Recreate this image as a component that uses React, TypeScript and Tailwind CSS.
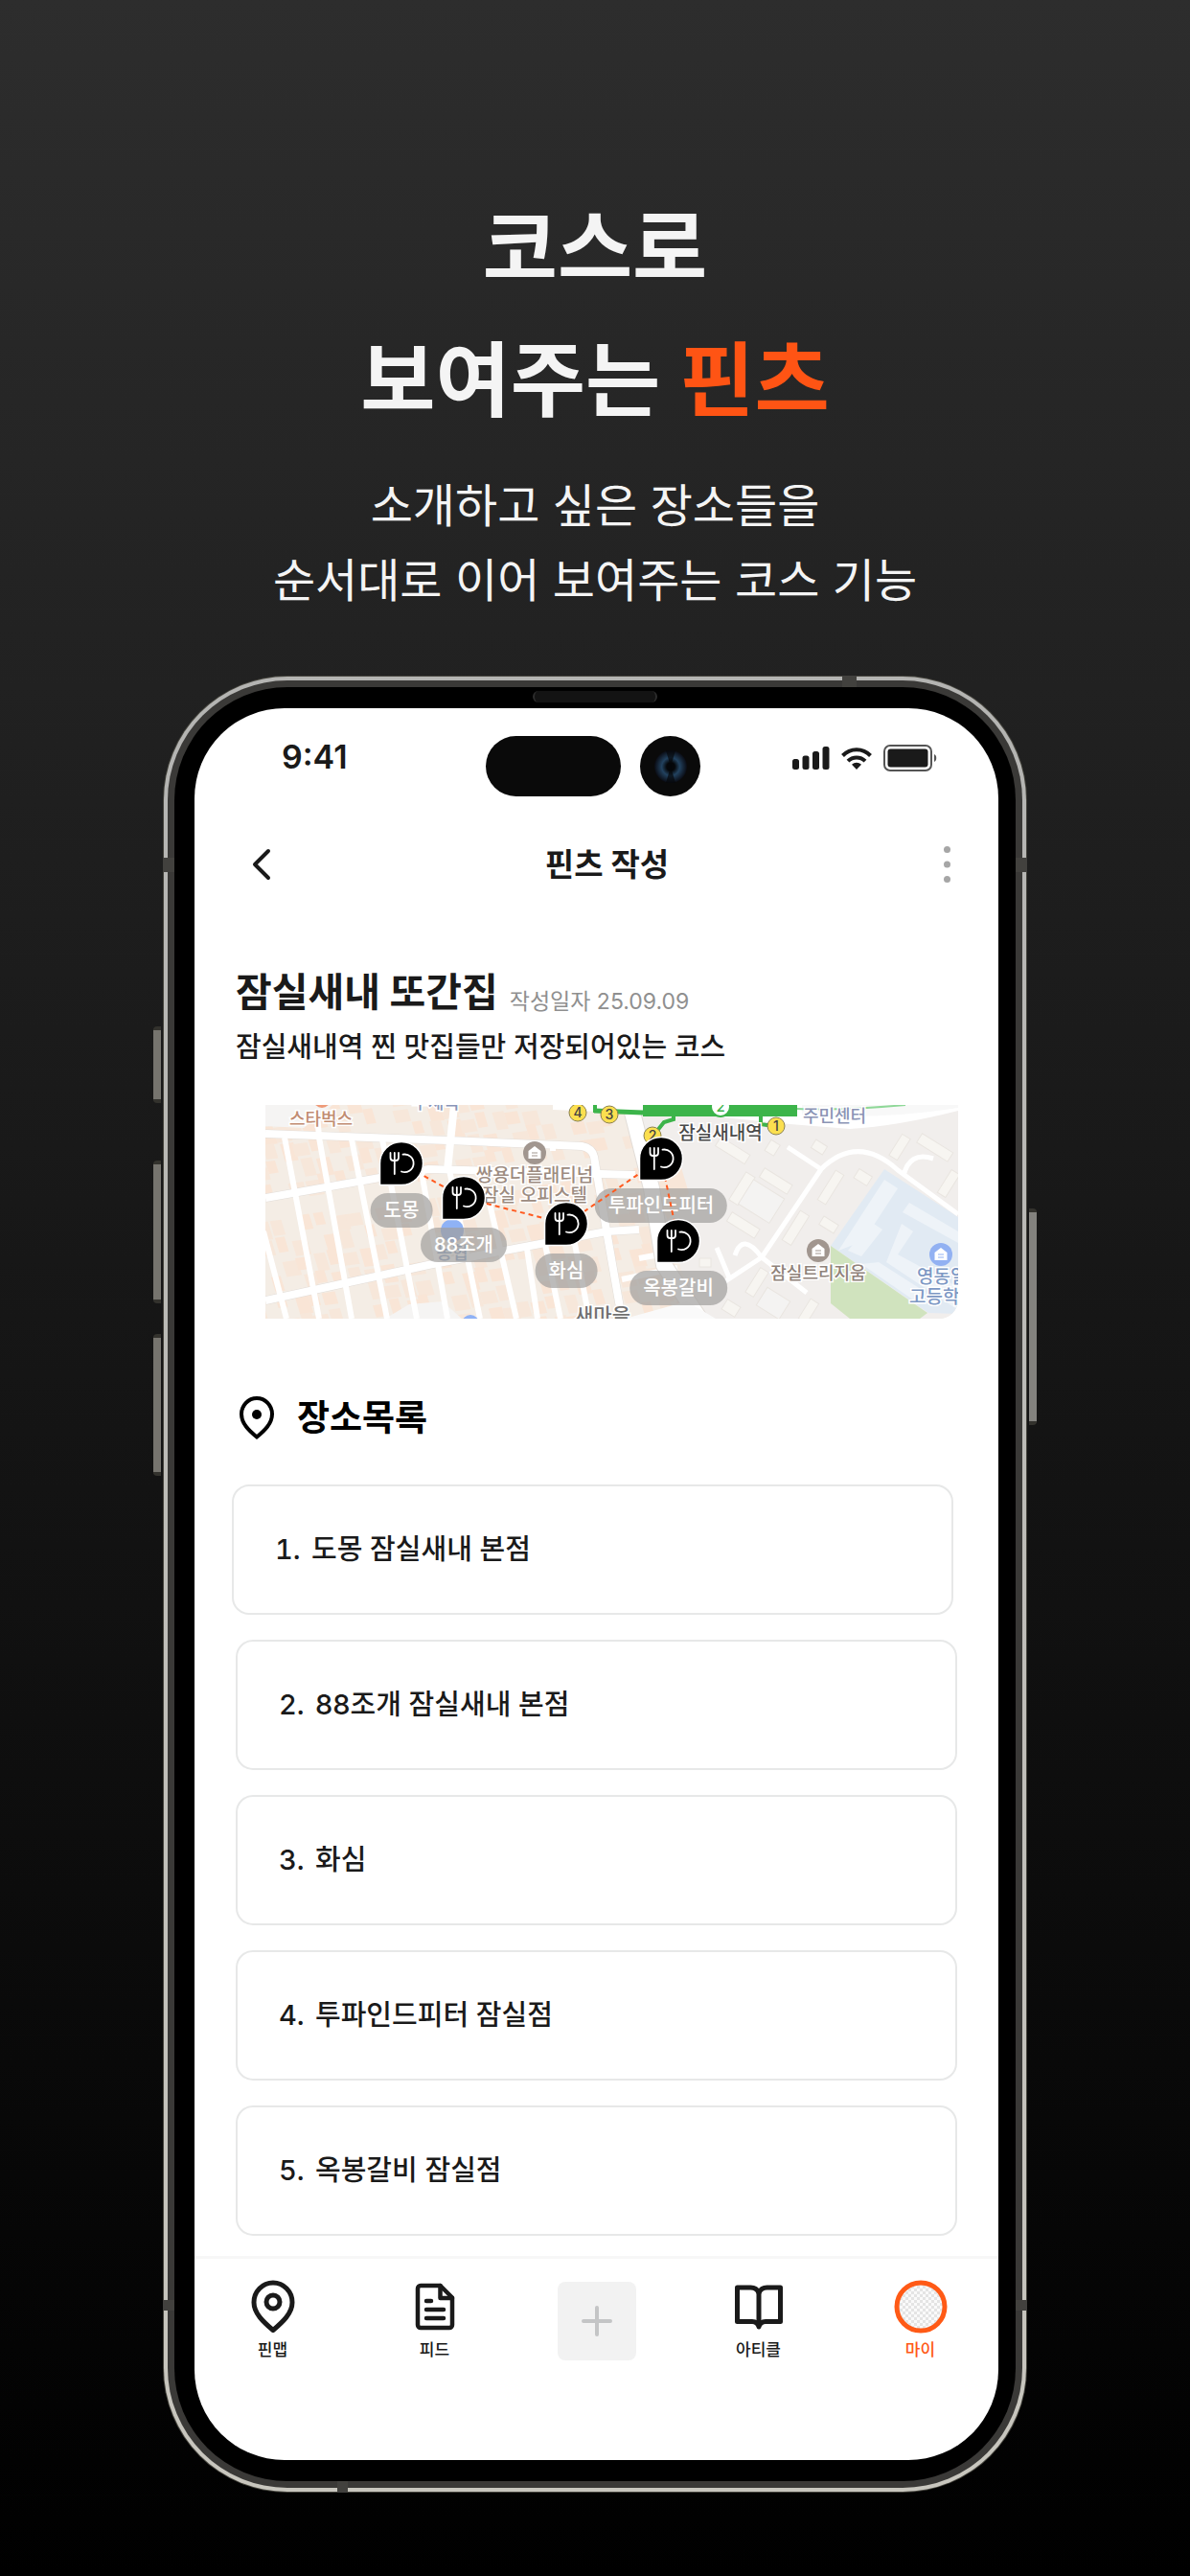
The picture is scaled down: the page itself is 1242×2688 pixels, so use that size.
import { ReactNode } from "react";

type Place = { id: number; name: string };

const places: Place[] = [
  { id: 1, name: "도몽 잠실새내 본점" },
  { id: 2, name: "88조개 잠실새내 본점" },
  { id: 3, name: "화심" },
  { id: 4, name: "투파인드피터 잠실점" },
  { id: 5, name: "옥봉갈비 잠실점" },
];

// Pin centers, in map pixels
const pins = [
  { label: "도몽", x: 142, y: 61 },
  { label: "88조개", x: 207, y: 97 },
  { label: "화심", x: 314, y: 124 },
  { label: "투파인드피터", x: 413, y: 56 },
  { label: "옥봉갈비", x: 431, y: 142 },
];

const route = pins.map((pin) => `${pin.x},${pin.y}`).join(" ");

// Small building footprints in the blocks on the left side of the map
const lots: { x: number; y: number; w: number; h: number; tone: number }[] = [];
for (let row = 0; row < 14; row++) {
  for (let col = 0; col < 32; col++) {
    const seed = (row * 37 + col * 53 + row * col * 7) % 11;
    if (seed < 8) {
      lots.push({
        x: -60 + col * 16 + (seed % 3) * 2,
        y: -28 + row * 20 + (seed % 4) * 2,
        w: 10 + (seed % 4) * 2,
        h: 13 + (seed % 3) * 3,
        tone: seed % 2,
      });
    }
  }
}

const SignalIcon = () => (
  <svg width="39" height="24" viewBox="0 0 39 24" fill="#1a1a1a">
    <rect x="0" y="13" width="7" height="11" rx="2.500" />
    <rect x="10.5" y="9.500" width="7" height="14.500" rx="2.500" />
    <rect x="21" y="5" width="7" height="19" rx="2.500" />
    <rect x="31.5" y="0" width="7" height="24" rx="2.500" />
  </svg>
);

const WifiIcon = () => (
  <svg width="32" height="23" viewBox="0 0 32 23" fill="none" stroke="#1a1a1a" strokeWidth="4">
    <path d="M1.5 8.5C9.5 .2 22.5 .2 30.500 8.500" />
    <path d="M7 14.200C12 9.200 20 9.200 25 14.200" />
    <path d="M16 23l-5-5.200c2.800-2.700 7.200-2.700 10 0z" fill="#1a1a1a" stroke="none" />
  </svg>
);

const BatteryIcon = () => (
  <svg width="56" height="28" viewBox="0 0 56 28" fill="none">
    <rect x="1" y="1" width="49" height="26" rx="6" stroke="#555" strokeWidth="2" />
    <rect x="4.500" y="4.500" width="42" height="19" rx="3" fill="#1a1a1a" />
    <path d="M53 10c3 1.300 3 6.700 0 8z" fill="#555" />
  </svg>
);

const PinIcon = () => (
  <svg width="46" height="56" viewBox="0 0 46 56" fill="none" stroke="#1a1a1a" strokeWidth="5">
    <path d="M23 52.500C13 44 3 35 3 23.500a20 20.500 0 0 1 40 0C43 35 33 44 23 52.500z" strokeLinejoin="round" />
    <circle cx="23" cy="23" r="7" />
  </svg>
);

const FeedIcon = () => (
  <svg width="42" height="50" viewBox="0 0 42 50" fill="none" stroke="#1a1a1a" strokeWidth="4.500" strokeLinecap="round" strokeLinejoin="round">
    <path d="M26.500 3H6a3 3 0 0 0-3 3v38a3 3 0 0 0 3 3h30a3 3 0 0 0 3-3V15.500z" />
    <path d="M26.500 3v13H39" />
    <path d="M12 19h5M12 28h18M12 37h18" />
  </svg>
);

const ArticleIcon = () => (
  <svg width="52" height="48" viewBox="0 0 52 48" fill="none" stroke="#1a1a1a" strokeWidth="5" strokeLinejoin="round">
    <path d="M26 9.500C24.500 6 21.500 4 17.500 4H3.500v35.500H19c4 0 6 1.500 7 5.500 1-4 3-5.500 7-5.500h15.500V4h-14c-4 0-7 2-8.500 5.500z" />
    <path d="M26 9v34" />
  </svg>
);

const MyIcon = () => (
  <svg width="56" height="56" viewBox="0 0 56 56">
    <defs>
      <pattern id="checker" width="6" height="6" patternUnits="userSpaceOnUse">
        <rect width="6" height="6" fill="#fafafa" />
        <rect width="3" height="3" fill="#e4e4e4" />
        <rect x="3" y="3" width="3" height="3" fill="#e4e4e4" />
      </pattern>
    </defs>
    <circle cx="28" cy="28" r="25" fill="url(#checker)" stroke="#ff5a16" strokeWidth="5" />
  </svg>
);

const HomeMark = ({ x, y, color }: { x: number; y: number; color: string }) => (
  <g>
    <circle cx={x} cy={y} r="12" fill={color} />
    <path d={`M${x} ${y - 7}l6.500 5v8h-13v-8z`} fill="#fff" />
    <path d={`M${x - 3} ${y}h6M${x - 3} ${y + 3}h6`} stroke={color} strokeWidth="1" />
  </g>
);

const Exit = ({ x, y, n }: { x: number; y: number; n: string }) => (
  <g>
    <circle cx={x} cy={y} r="9" fill="#fbdf4f" stroke="#8c8250" strokeWidth="1" />
    <text x={x} y={y + 5} fontSize="14" fontWeight="500" fill="#444" stroke="none" textAnchor="middle">
      {n}
    </text>
  </g>
);

const MapDrawing = () => (
  <svg
    className="absolute left-0 top-0 font-['Inter','Noto_Sans_CJK_KR',sans-serif]"
    width="723"
    height="223"
    viewBox="0 0 723 223"
  >
    <defs>
      <clipPath id="blocks">
        <path d="M0 0H383L403 87L453 223H0z" />
      </clipPath>
    </defs>
    <rect width="723" height="223" fill="#f1eeec" />

    {/* housing blocks */}
    <path d="M0 0H383L403 87L453 223H0z" fill="#f4ede5" />
    <g clipPath="url(#blocks)">
      <g transform="rotate(-8 200 110) skewX(9)">
        {lots.map((lot, i) => (
          <rect
            key={i}
            x={lot.x}
            y={lot.y}
            width={lot.w}
            height={lot.h}
            fill={lot.tone ? "#f7e7da" : "#f9e5d6"}
          />
        ))}
      </g>
    </g>
    <path d="M0 0H70L40 24L0 22z" fill="#f5f4f3" />
    <path d="M125 223L150 208L185 205L205 223z" fill="#f5f4f3" />
    <path d="M403 87L433 62L442 92L420 120z" fill="#f8e6d8" />

    {/* roads on the left */}
    <g fill="none" stroke="#e2ddd8" strokeWidth="9">
      <path d="M0 30L190 37L330 43Q341 45 343 54L357 137L372 223" />
      <path d="M0 97L170 67L386 73M0 204L170 167L260 150L356 132L390 130" />
    </g>
    <g fill="none" stroke="#fff" strokeWidth="8">
      <path d="M0 30L190 37L330 43Q341 45 343 54L357 137L372 223" />
      <path d="M0 97L170 67L386 73M0 204L170 167L260 150L356 132L390 130" />
      <path d="M197 0L190 68" />
    </g>
    <g fill="none" stroke="#fff" strokeWidth="6">
      <path d="M54 8L56 34L90 223M20 34L56 223M-2 132L22 223M90 36L127 223M122 36L158 223" />
      <path d="M163 70L190 223M192 68L224 223M231 90L262 223M273 150L284 223M292 146L308 223M322 140L338 223" />
      <path d="M300 40V48M372 182L430 170M390 160L412 156" />
    </g>
    <path d="M383 8L403 87L416 167L453 223" fill="none" stroke="#e2ddd8" strokeWidth="18" />
    <path d="M383 8L403 87L416 167L453 223" fill="none" stroke="#fff" strokeWidth="16" />
    <path d="M375 223L440 205L470 223z" fill="#fafafa" />

    {/* avenue under the station */}
    <path d="M300 0H723V6Q660 22 610 25Q540 20 470 12L300 5z" fill="#fff" />
    <path d="M560 0H723V3Q640 16 560 10z" fill="#f8f8f8" />

    {/* apartment complex */}
    <g fill="#f7f5f1" stroke="#e9e5e0" strokeWidth="1">
      <rect x="470" y="42" width="36" height="11" transform="rotate(32 488 47)" />
      <rect x="524" y="38" width="11" height="13" transform="rotate(32 529 44)" />
      <rect x="571" y="39" width="14" height="10" transform="rotate(32 578 44)" />
      <rect x="657" y="31" width="10" height="26" transform="rotate(32 662 44)" />
      <rect x="680" y="39" width="38" height="11" transform="rotate(32 699 44)" />
      <rect x="616" y="70" width="16" height="11" transform="rotate(32 624 75)" />
      <rect x="708" y="68" width="10" height="28" transform="rotate(32 713 82)" />
      <rect x="492" y="70" width="11" height="34" transform="rotate(32 497 87)" />
      <rect x="516" y="74" width="34" height="11" transform="rotate(32 533 79)" />
      <rect x="585" y="68" width="10" height="36" transform="rotate(32 590 86)" />
      <rect x="498" y="86" width="38" height="30" transform="rotate(32 518 102)" fill="#f4f3f2" />
      <rect x="548" y="110" width="11" height="36" transform="rotate(32 553 128)" />
      <rect x="482" y="120" width="34" height="11" transform="rotate(32 499 125)" />
      <rect x="579" y="120" width="18" height="10" transform="rotate(32 588 125)" />
      <rect x="453" y="160" width="12" height="9" />
      <rect x="508" y="170" width="10" height="30" transform="rotate(32 513 185)" />
      <rect x="516" y="196" width="28" height="22" transform="rotate(32 530 207)" fill="#f4f3f2" />
      <rect x="562" y="203" width="10" height="24" transform="rotate(32 567 215)" />
      <rect x="478" y="206" width="16" height="12" transform="rotate(32 486 212)" />
    </g>

    <path d="M646 67L723 117V218L692 217L590 147z" fill="#e1eaf3" />
    <g fill="#eef3f8">
      <path d="M646 78L660 87L624 142L598 152z" />
      <path d="M632 122L644 130L622 158L608 152z" />
      <path d="M672 102L723 132V144L665 112z" />
      <path d="M664 124L676 132L660 156L723 190V214L648 164z" />
      <path d="M640 164L690 196L680 206L622 166z" />
    </g>
    <path d="M590 147L691 217L683 223H610L590 207z" fill="#d0e3be" />

    <g fill="none" stroke="#fff" strokeWidth="5" strokeLinejoin="round">
      <path d="M545 44L580 67M480 184L518 159L580 67Q618 30 660 68L723 114M666 74Q672 48 697 56" />
      <path d="M471 149L484 180M490 157Q498 132 518 159L565 196" />
    </g>

    {/* subway line and exits */}
    <path d="M343 6L394 8" stroke="#3cb44a" strokeWidth="5" fill="none" />
    <path d="M344 0V8" stroke="#3cb44a" strokeWidth="4" fill="none" />
    <path d="M555 4Q600 6 668 0" stroke="#8fd898" strokeWidth="2" fill="none" />
    <path d="M394 0H555V12H394z" fill="#3cb44a" />
    <path d="M426 8V15L416 18L408 28M517 10V20L530 22" stroke="#3cb44a" strokeWidth="4" fill="none" />
    <circle cx="475" cy="2" r="10" fill="#fff" stroke="#3cb44a" strokeWidth="2" />
    <text x="475" y="7" fontSize="15" fontWeight="500" fill="#3cb44a" textAnchor="middle">2</text>
    <Exit x={326} y={8} n="4" />
    <Exit x={359} y={10} n="3" />
    <Exit x={404} y={32} n="2" />
    <Exit x={533} y={22} n="1" />

    {/* place marks */}
    <circle cx="59" cy="-6" r="9" fill="#ee9a78" />
    <circle cx="195" cy="131" r="12" fill="#8fb2f5" />
    <circle cx="214" cy="228" r="9" fill="#8fb2f5" />
    <HomeMark x={281} y={50} color="#a1968f" />
    <HomeMark x={577} y={152} color="#a1968f" />
    <HomeMark x={705} y={156} color="#92b1f2" />

    <g fontSize="18" fontWeight="500" textAnchor="middle" stroke="#fff" strokeWidth="3" paintOrder="stroke">
      <text x="58" y="21" fill="#c18c72">스타벅스</text>
      <text x="178" y="4" fill="#8a95b8">우체국</text>
      <text x="281" y="80" fontSize="19" fill="#9d8c81">쌍용더플래티넘</text>
      <text x="281" y="101" fontSize="19" fill="#9d8c81">잠실 오피스텔</text>
      <text x="475" y="36" fontSize="19" fill="#4a4a4a">잠실새내역</text>
      <text x="594" y="18" fill="#8b94b5">주민센터</text>
      <text x="352" y="227" fontSize="21" fill="#707070">새마을</text>
      <text x="577" y="182" fill="#8f827a">잠실트리지움</text>
      <text x="195" y="161" fill="#7d98c4">농협</text>
      <text x="680" y="186" fontSize="19" fill="#7d98c4" textAnchor="start">영동일</text>
      <text x="672" y="207" fontSize="19" fill="#7d98c4" textAnchor="start">고등학교</text>
    </g>
  </svg>
);

const CourseMap = () => (
  <div className="relative ml-[74px] mr-[42px] mt-10 h-[223px] overflow-hidden rounded-br-[20px] bg-[#f1eeec]">
    <MapDrawing />
    {pins.map((pin) => (
      <span
        key={pin.label}
        className="absolute flex h-[36px] -translate-x-1/2 items-center whitespace-nowrap rounded-full bg-[#a09e9c]/70 px-[14px] text-[20px] leading-[36px] font-medium text-white"
        style={{ left: pin.x, top: pin.y + 31 }}
      >
        {pin.label}
      </span>
    ))}
    <svg className="absolute left-0 top-0" width="723" height="223" viewBox="0 0 723 223">
      <polyline points={route} fill="none" stroke="#ff5a1f" strokeWidth="2" strokeDasharray="5 4" />
      {pins.map((pin) => (
        <g key={pin.label} transform={`translate(${pin.x} ${pin.y})`}>
          <path d="M-22.500 22.500V0A22.500 22.500 0 1 1 0 22.500z" fill="#000" stroke="#fff" strokeWidth="1.500" />
          <g fill="none" stroke="#fff" strokeWidth="1.800" strokeLinecap="round">
            <path d="M-11.500-11v5q0 3 3 3h2.500q3 0 3-3V-11M-7.200-11V11" />
            <path d="M1.500-9.300A9.300 9.300 0 1 1 0 8.500" />
          </g>
        </g>
      ))}
    </svg>
  </div>
);

const StatusBar = () => (
  <div className="grid grid-cols-[1fr_auto_1fr] items-start pr-[7px] pt-[29px]">
    <div className="pl-[91px] text-[34px] leading-[44px] font-semibold">9:41</div>
    <div className="flex gap-5">
      <div className="h-[63px] w-[141px] rounded-full bg-[#0a0a0a]" />
      <div className="flex h-[63px] w-[63px] items-center justify-center rounded-full bg-[#0a0a0a]">
        <svg width="36" height="36" viewBox="0 0 36 36">
          <defs>
            <radialGradient id="lens">
              <stop offset="0.250" stopColor="#05070a" />
              <stop offset="0.550" stopColor="#22425f" />
              <stop offset="1" stopColor="#0a0c14" />
            </radialGradient>
          </defs>
          <circle cx="18" cy="18" r="17" fill="url(#lens)" />
          <path d="M18 18L13 1H23zM18 18L13 35H23z" fill="#05070a" opacity="0.700" />
        </svg>
      </div>
    </div>
    <div className="flex h-[46px] items-center justify-end gap-3 pr-[57px]">
      <SignalIcon />
      <WifiIcon />
      <BatteryIcon />
    </div>
  </div>
);

const NavItem = ({
  label,
  active,
  children,
}: {
  label: string;
  active?: boolean;
  children: ReactNode;
}) => (
  <button type="button" className="flex flex-col items-center gap-[5px]">
    <span className="flex h-[56px] items-center">{children}</span>
    <span
      className={
        active
          ? "text-[17px] leading-6 font-medium text-[#ff5a16]"
          : "text-[17px] leading-6 font-medium text-[#1a1a1a]"
      }
    >
      {label}
    </span>
  </button>
);

const Screen = () => (
  <div className="overflow-hidden rounded-[94px] bg-white text-[#1a1a1a]">
    <StatusBar />

    <header className="mt-10 flex h-[62px] items-center justify-between pl-[60px] pr-[49px]">
      <button type="button" aria-label="뒤로">
        <svg width="20" height="34" viewBox="0 0 20 34" fill="none" stroke="#1a1a1a" strokeWidth="4" strokeLinecap="round" strokeLinejoin="round">
          <path d="M17 3L3 17L17 31" />
        </svg>
      </button>
      <h2 className="text-[33px] leading-[62px] font-bold">핀츠 작성</h2>
      <button type="button" aria-label="더보기">
        <svg width="9" height="40" viewBox="0 0 9 40" fill="#a6a6a6">
          <circle cx="4.500" cy="4.500" r="3.500" />
          <circle cx="4.500" cy="20" r="3.500" />
          <circle cx="4.500" cy="35.500" r="3.500" />
        </svg>
      </button>
    </header>

    <section className="mt-[78px] px-[43px]">
      <div className="flex items-end gap-3">
        <h3 className="text-[41px] leading-[48px] font-bold">잠실새내 또간집</h3>
        <span className="text-[23px] leading-7 font-normal text-[#8f8f8f]">작성일자 25.09.09</span>
      </div>
      <p className="mt-[14px] text-[29px] leading-10 font-medium">
        잠실새내역 찐 맛집들만 저장되어있는 코스
      </p>
    </section>

    <CourseMap />

    <section className="mt-20 px-[43px]">
      <div className="flex h-12 items-center gap-6 pl-1 text-black">
        <svg width="36" height="46" viewBox="0 0 36 46" fill="none" stroke="currentColor" strokeWidth="4">
          <path d="M18 42.500C10 36 2 28.500 2 18.500a16 16.500 0 0 1 32 0C34 28.500 26 36 18 42.500z" />
          <circle cx="18" cy="19" r="5" fill="currentColor" stroke="none" />
        </svg>
        <h3 className="text-[37px] leading-[48px] font-bold">장소목록</h3>
      </div>

      <ol className="mt-[45px] flex flex-col gap-[26px]">
        {places.map((place) => (
          <li
            key={place.id}
            className="flex h-[136px] items-center gap-[9px] rounded-[18px] border-2 border-[#e7e8e8] pl-[43px] text-[29px] font-medium first:-ml-1 first:mr-1"
          >
            <span className="w-[29px] tabular-nums">{place.id}.</span>
            <span>{place.name}</span>
          </li>
        ))}
      </ol>
    </section>

    <nav className="mt-[21px] border-t-[3px] border-[#f7f7f7] pb-[103px] pt-[22px]">
      <div className="-mx-[3px] grid grid-cols-5">
        <NavItem label="핀맵">
          <PinIcon />
        </NavItem>
        <NavItem label="피드">
          <FeedIcon />
        </NavItem>
        <button
          type="button"
          aria-label="추가"
          className="flex h-[82px] w-[82px] items-center justify-center self-center justify-self-center rounded-lg bg-[#f2f2f2]"
        >
          <svg width="32" height="32" viewBox="0 0 32 32" stroke="#c4c5c6" strokeWidth="4" strokeLinecap="round">
            <path d="M16 2V30M2 16H30" />
          </svg>
        </button>
        <NavItem label="아티클">
          <ArticleIcon />
        </NavItem>
        <NavItem label="마이" active>
          <MyIcon />
        </NavItem>
      </div>
    </nav>
  </div>
);

const Phone = () => (
  <div className="relative mx-auto w-full max-w-[902px]">
    {/* side keys */}
    <div className="absolute -left-[10px] top-[366px] h-[80px] w-2 rounded-l-sm border-y-4 border-[#33322d] bg-[#76746e]" />
    <div className="absolute -left-[10px] top-[506px] h-[149px] w-2 rounded-l-sm border-y-4 border-[#33322d] bg-[#76746e]" />
    <div className="absolute -left-[10px] top-[687px] h-[148px] w-2 rounded-l-sm border-y-4 border-[#33322d] bg-[#76746e]" />
    <div className="absolute -right-[10px] top-[556px] h-[226px] w-2 rounded-r-sm border-y-4 border-[#33322d] bg-[#83827e]" />

    <div className="rounded-[130px] bg-[#45443d] p-px">
      <div className="rounded-[129px] bg-linear-to-b from-[#b4b4b2] to-[#c8c6be] p-1">
        <div className="rounded-[125px] bg-[#3a3937] p-[7px]">
          <div className="rounded-[118px] bg-black pb-[22px] pl-[21px] pr-[18px] pt-[22px]">
            <Screen />
          </div>
        </div>
      </div>
    </div>

    {/* antenna bands */}
    <div className="absolute left-0 top-[190px] h-[15px] w-3 bg-[#42413e]" />
    <div className="absolute right-0 top-[190px] h-[15px] w-3 bg-[#42413e]" />
    <div className="absolute bottom-[190px] left-0 h-[11px] w-3 bg-[#42413e]" />
    <div className="absolute bottom-[190px] right-0 h-[11px] w-3 bg-[#42413e]" />
    <div className="absolute right-[178px] top-0 h-3 w-[15px] bg-[#42413e]" />
    <div className="absolute bottom-0 left-[182px] h-3 w-[11px] bg-[#42413e]" />

    {/* earpiece */}
    <div className="absolute left-1/2 top-4 h-3 w-[130px] -translate-x-1/2 rounded-full border-x-2 border-[#2c2c2c] bg-[#131313]" />
  </div>
);

const App = () => (
  <main className="min-h-screen bg-linear-to-b/srgb from-[#2d2d2d] to-black pb-[86px] pt-[191px] font-['Inter','Noto_Sans_CJK_KR',sans-serif]">
    <div className="text-center text-[#f4f4f4]">
      <h1 className="text-[85px] leading-[138px] font-bold">
        코스로
        <br />
        보여주는 <span className="text-[#ff5414]">핀츠</span>
      </h1>
      <p className="mt-[22px] text-[48px] leading-[78px] font-normal">
        소개하고 싶은 장소들을
        <br />
        순서대로 이어 보여주는 코스 기능
      </p>
    </div>
    <div className="mt-[60px]">
      <Phone />
    </div>
  </main>
);

export default App;
